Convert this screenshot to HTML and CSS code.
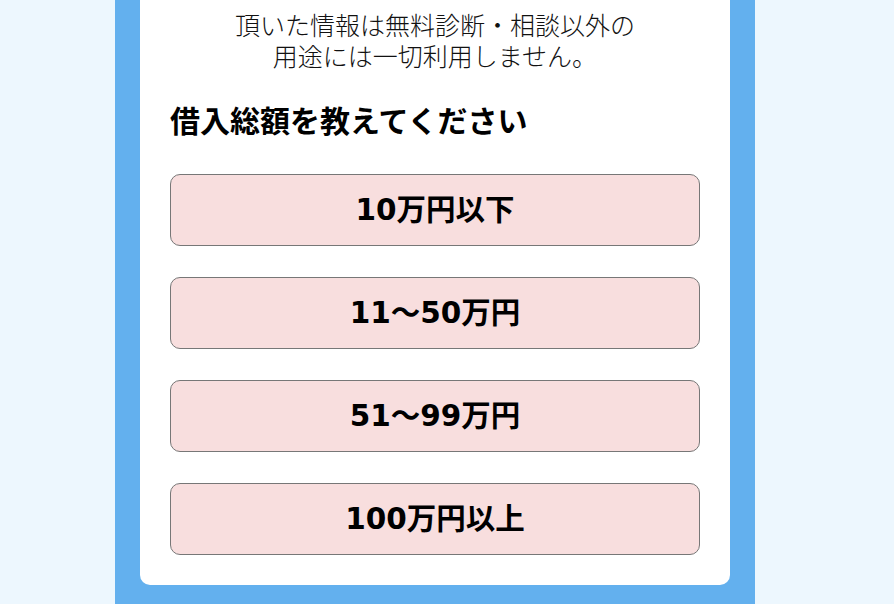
FILE: index.html
```html
<!DOCTYPE html>
<html lang="ja">
<head>
<meta charset="utf-8">
<link rel="stylesheet" href="styles.css">
</head>
<body>
<div class="page">
  <div class="frame">
    <div class="card">
      <p class="note">頂いた情報は無料診断・相談以外の<br>用途には一切利用しません。</p>
      <h2 class="question">借入総額を教えてください</h2>
      <div class="options">
        <button class="option">10万円以下</button>
        <button class="option">11〜50万円</button>
        <button class="option">51〜99万円</button>
        <button class="option">100万円以上</button>
      </div>
    </div>
  </div>
</div>
</body>
</html>
```
FILE: styles.css
```css
html, body {
  margin: 0;
  padding: 0;
  background: #edf7fe;
  height: 100%;
  overflow: hidden;
}
.page {
  display: flex;
  padding-left: 115px;
}
.frame {
  width: 640px;
  background: #63b0ee;
  padding: 0 25px 25px;
  box-sizing: border-box;
}
.card {
  background: #ffffff;
  border-radius: 0 0 10px 10px;
  padding: 9px 30px 30px;
  font-family: "DejaVu Sans", "Noto Sans CJK JP", sans-serif;
  color: #000;
}
.note {
  margin: 0;
  text-align: center;
  font-size: 25px;
  line-height: 31px;
  font-weight: 300;
  color: #111;
  font-family: "Noto Sans CJK JP", sans-serif;
}
.question {
  margin: 28px 0 0;
  font-size: 30px;
  line-height: 40px;
  font-weight: 700;
  font-family: "Noto Sans CJK JP", sans-serif;
}
.options {
  display: flex;
  flex-direction: column;
  gap: 31px;
  margin-top: 35px;
}
.option {
  height: 72px;
  width: 100%;
  background: #f8dede;
  border: 1px solid #777;
  border-radius: 10px;
  font-family: "DejaVu Sans", "Noto Sans CJK JP", sans-serif;
  font-size: 29.5px;
  font-weight: 700;
  color: #000;
  padding: 0 0 6px;
  display: flex;
  align-items: center;
  justify-content: center;
}
```
